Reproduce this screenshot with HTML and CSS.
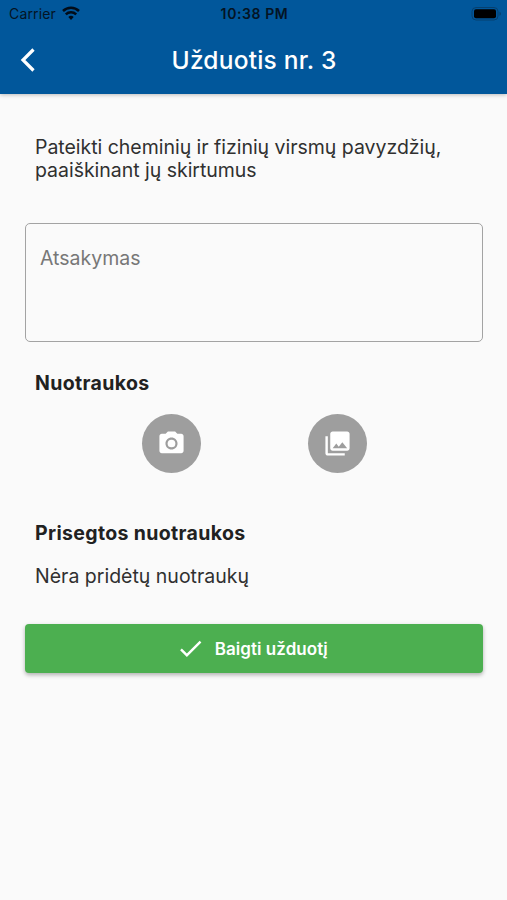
FILE: index.html
```html
<!DOCTYPE html>
<html lang="lt">
<head>
<meta charset="utf-8">
<title>Užduotis nr. 3</title>
<link rel="stylesheet" href="styles.css">
</head>
<body>
<header class="header">
  <div class="status">
    <div class="carrier"><span>Carrier</span>
      <svg class="wifi" viewBox="0 0 18 14"><path d="M9 14 6.3 10.9a4 4 0 0 1 5.4 0Z" fill="#020c18"/><path d="M1 5a11.6 11.6 0 0 1 16 0M3.8 8.3a7.6 7.6 0 0 1 10.4 0" fill="none" stroke="#020c18" stroke-width="2.500"/></svg>
    </div>
    <div class="time">10:38 PM</div>
    <svg class="battery" viewBox="0 0 31 14"><rect x="1" y=".5" width="26" height="12.500" rx="4" fill="none" stroke="#06406f"/><rect x="3" y="2.300" width="22" height="9" rx="2" fill="#000"/><path d="M28.500 4.800q1.500.5 1.500 2t-1.500 2Z" fill="#06406f"/></svg>
  </div>
  <div class="nav">
    <svg class="back" viewBox="0 0 16 26"><path d="M13.500 2.500 3 13l10.500 10.500" fill="none" stroke="#fff" stroke-width="3.200"/></svg>
    <h1 class="title">Užduotis nr. 3</h1>
  </div>
</header>
<main class="content">
  <p class="task">Pateikti cheminių ir fizinių virsmų pavyzdžių,<br>paaiškinant jų skirtumus</p>
  <div class="answer">Atsakymas</div>
  <h2 class="heading">Nuotraukos</h2>
  <div class="actions">
    <div class="round"><svg viewBox="0 0 24 24"><circle cx="12" cy="12" r="3.200"/><path d="M9 2 7.170 4H4c-1.100 0-2 .9-2 2v12c0 1.100.9 2 2 2h16c1.100 0 2-.9 2-2V6c0-1.100-.9-2-2-2h-3.170L15 2H9zm3 15c-2.760 0-5-2.240-5-5s2.240-5 5-5 5 2.240 5 5-2.240 5-5 5z"/></svg></div>
    <div class="round"><svg viewBox="0 0 24 24"><path d="M22 16V4c0-1.100-.9-2-2-2H8c-1.100 0-2 .9-2 2v12c0 1.100.9 2 2 2h12c1.100 0 2-.9 2-2zm-11-4 2.030 2.710L16 11l4 5H8l3-4zM2 6v14c0 1.100.9 2 2 2h14v-2H4V6H2z"/></svg></div>
  </div>
  <h2 class="heading attached">Prisegtos nuotraukos</h2>
  <p class="empty">Nėra pridėtų nuotraukų</p>
  <div class="submit"><svg viewBox="0 0 24 24"><path d="M9 16.170 4.830 12l-1.420 1.410L9 19 21 7l-1.410-1.410z"/></svg><span>Baigti užduotį</span></div>
</main>
</body>
</html>
```
FILE: styles.css
```css
* { box-sizing: border-box; }
body { margin: 0; height: 900px; background: #fafafa; color: #303030; font-family: Inter, "Liberation Sans", sans-serif; overflow: hidden; }
h1, h2, p { margin: 0; }
.header { height: 94px; background: #01579b; box-shadow: 0 1px 4px rgba(0,0,0,.25); }
.status { height: 27px; padding: 0 5px 0 9px; display: grid; grid-template-columns: 1fr auto 1fr; align-items: center; color: #041424; font-size: 14px; }
.carrier { display: flex; align-items: center; gap: 6px; letter-spacing: .15px; }
.wifi { width: 18px; height: 14px; margin-top: -1px; }
.time { font-weight: 600; letter-spacing: .6px; margin-left: -2px; }
.battery { width: 31px; height: 14px; justify-self: end; }
.nav { height: 66px; display: grid; grid-template-columns: 47px 1fr 47px; align-items: center; }
.back { width: 16px; height: 26px; margin-left: 20px; }
.title { color: #fff; text-align: center; font-size: 24.500px; line-height: 30px; font-weight: 500; letter-spacing: .2px; padding-left: 1px; }
.content { padding: 42px 24.500px 0 25px; }
.task { height: 87px; padding-left: 10px; font-size: 19.500px; line-height: 23px; letter-spacing: -.025px; }
.answer { height: 119px; padding: 22px 14px; border: 1px solid #a3a3a3; border-radius: 5px; color: #777; font-size: 19.500px; line-height: 24px; }
.heading { padding-left: 10px; margin-top: 29px; font-size: 19.500px; line-height: 24px; font-weight: 650; letter-spacing: .35px; color: #212121; }
.actions { display: flex; margin: 18.500px 62.500px 0 63.500px; justify-content: space-around; }
.round { width: 59px; height: 59px; border-radius: 50%; background: #9e9e9e; display: grid; place-items: center; }
.round svg { width: 29px; height: 29px; fill: #fff; }
.attached { margin-top: 48.500px; }
.empty { padding-left: 10px; margin-top: 19px; font-size: 19.500px; line-height: 24px; }
.submit { margin-top: 36px; padding-right: 4px; height: 49px; border-radius: 4px; background: #4caf50; box-shadow: 0 2px 4px rgba(0,0,0,.3); color: #fff; display: flex; align-items: center; justify-content: center; gap: 10px; font-size: 17px; font-weight: 600; letter-spacing: .05px; }
.submit svg { width: 29px; height: 29px; fill: #fff; }
```
